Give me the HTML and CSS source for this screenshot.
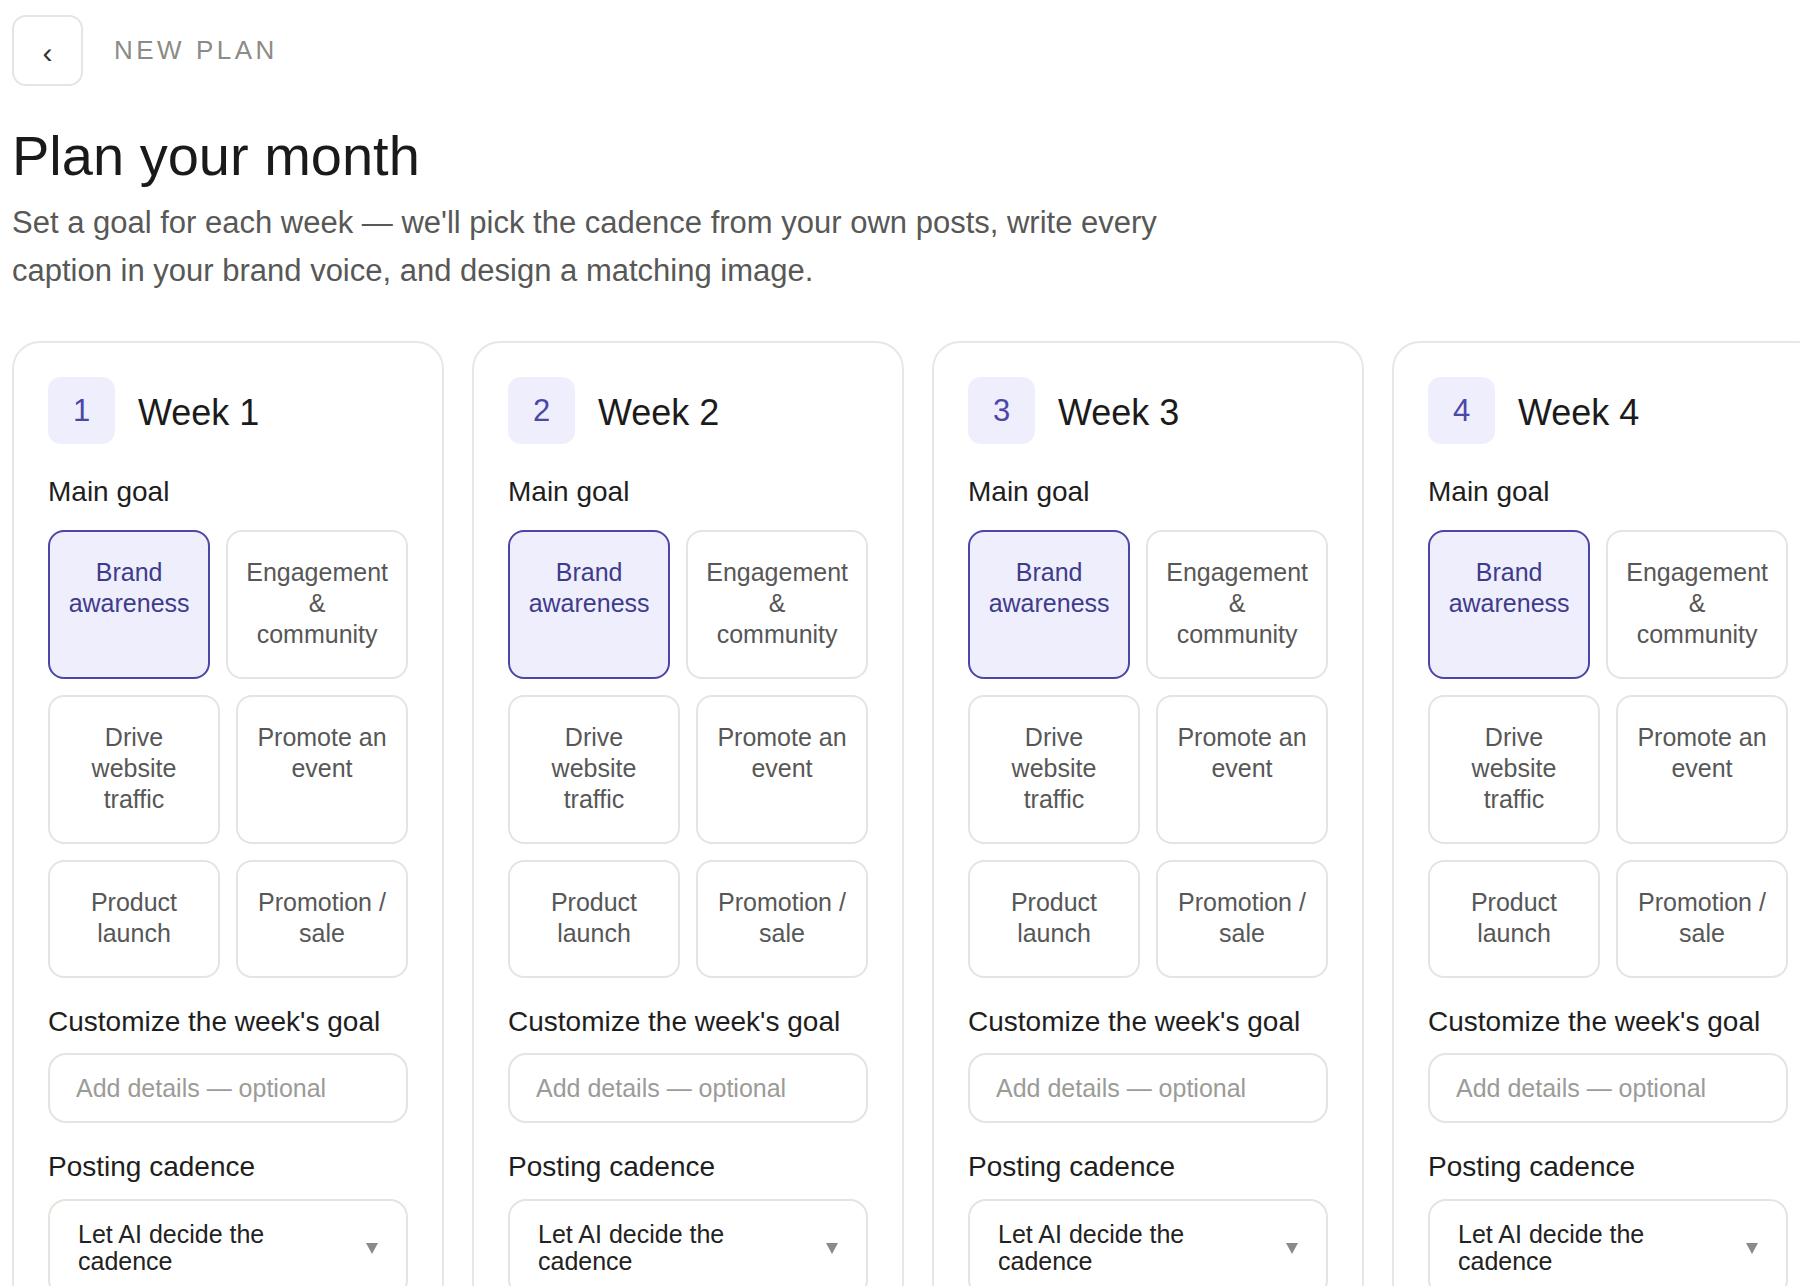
FILE: index.html
```html
<!DOCTYPE html>
<html lang="en">
<head>
    <meta charset="UTF-8">
    <meta name="viewport" content="width=device-width, initial-scale=1.0">
    <title>New Plan - Plan your month</title>
    <link rel="stylesheet" href="styles.css">
</head>
<body>

    <div class="page">
        <!-- Top bar -->
        <header class="topbar">
            <button type="button" class="back-btn" aria-label="Back">&lsaquo;</button>
            <span class="eyebrow">NEW PLAN</span>
        </header>

        <h1 class="page-title">Plan your month</h1>
        <p class="page-intro">Set a goal for each week — we'll pick the cadence from your own posts, write every caption in your brand voice, and design a matching image.</p>

        <!-- Weeks -->
        <div class="weeks">

            <section class="week-card">
                <div class="week-head">
                    <span class="week-num">1</span>
                    <h2 class="week-title">Week 1</h2>
                </div>
                <div class="field">
                    <div class="field-label">Main goal</div>
                    <div class="goals">
                        <div class="goal-row">
                            <div class="goal selected">Brand awareness</div>
                            <div class="goal">Engagement &amp; community</div>
                        </div>
                        <div class="goal-row">
                            <div class="goal">Drive website traffic</div>
                            <div class="goal">Promote an event</div>
                        </div>
                        <div class="goal-row">
                            <div class="goal">Product launch</div>
                            <div class="goal">Promotion / sale</div>
                        </div>
                    </div>
                </div>
                <div class="field">
                    <label class="field-label" for="details1">Customize the week's goal</label>
                    <input type="text" id="details1" class="text-input" placeholder="Add details — optional">
                </div>
                <div class="field">
                    <div class="field-label">Posting cadence</div>
                    <div class="select-box">
                        <span class="select-value">Let AI decide the cadence</span>
                        <svg class="select-arrow" width="12" height="11" viewBox="0 0 12 11"><polygon points="0,0 12,0 6,11" fill="#8a8a88"/></svg>
                    </div>
                </div>
            </section>

            <section class="week-card">
                <div class="week-head">
                    <span class="week-num">2</span>
                    <h2 class="week-title">Week 2</h2>
                </div>
                <div class="field">
                    <div class="field-label">Main goal</div>
                    <div class="goals">
                        <div class="goal-row">
                            <div class="goal selected">Brand awareness</div>
                            <div class="goal">Engagement &amp; community</div>
                        </div>
                        <div class="goal-row">
                            <div class="goal">Drive website traffic</div>
                            <div class="goal">Promote an event</div>
                        </div>
                        <div class="goal-row">
                            <div class="goal">Product launch</div>
                            <div class="goal">Promotion / sale</div>
                        </div>
                    </div>
                </div>
                <div class="field">
                    <label class="field-label" for="details2">Customize the week's goal</label>
                    <input type="text" id="details2" class="text-input" placeholder="Add details — optional">
                </div>
                <div class="field">
                    <div class="field-label">Posting cadence</div>
                    <div class="select-box">
                        <span class="select-value">Let AI decide the cadence</span>
                        <svg class="select-arrow" width="12" height="11" viewBox="0 0 12 11"><polygon points="0,0 12,0 6,11" fill="#8a8a88"/></svg>
                    </div>
                </div>
            </section>

            <section class="week-card">
                <div class="week-head">
                    <span class="week-num">3</span>
                    <h2 class="week-title">Week 3</h2>
                </div>
                <div class="field">
                    <div class="field-label">Main goal</div>
                    <div class="goals">
                        <div class="goal-row">
                            <div class="goal selected">Brand awareness</div>
                            <div class="goal">Engagement &amp; community</div>
                        </div>
                        <div class="goal-row">
                            <div class="goal">Drive website traffic</div>
                            <div class="goal">Promote an event</div>
                        </div>
                        <div class="goal-row">
                            <div class="goal">Product launch</div>
                            <div class="goal">Promotion / sale</div>
                        </div>
                    </div>
                </div>
                <div class="field">
                    <label class="field-label" for="details3">Customize the week's goal</label>
                    <input type="text" id="details3" class="text-input" placeholder="Add details — optional">
                </div>
                <div class="field">
                    <div class="field-label">Posting cadence</div>
                    <div class="select-box">
                        <span class="select-value">Let AI decide the cadence</span>
                        <svg class="select-arrow" width="12" height="11" viewBox="0 0 12 11"><polygon points="0,0 12,0 6,11" fill="#8a8a88"/></svg>
                    </div>
                </div>
            </section>

            <section class="week-card">
                <div class="week-head">
                    <span class="week-num">4</span>
                    <h2 class="week-title">Week 4</h2>
                </div>
                <div class="field">
                    <div class="field-label">Main goal</div>
                    <div class="goals">
                        <div class="goal-row">
                            <div class="goal selected">Brand awareness</div>
                            <div class="goal">Engagement &amp; community</div>
                        </div>
                        <div class="goal-row">
                            <div class="goal">Drive website traffic</div>
                            <div class="goal">Promote an event</div>
                        </div>
                        <div class="goal-row">
                            <div class="goal">Product launch</div>
                            <div class="goal">Promotion / sale</div>
                        </div>
                    </div>
                </div>
                <div class="field">
                    <label class="field-label" for="details4">Customize the week's goal</label>
                    <input type="text" id="details4" class="text-input" placeholder="Add details — optional">
                </div>
                <div class="field">
                    <div class="field-label">Posting cadence</div>
                    <div class="select-box">
                        <span class="select-value">Let AI decide the cadence</span>
                        <svg class="select-arrow" width="12" height="11" viewBox="0 0 12 11"><polygon points="0,0 12,0 6,11" fill="#8a8a88"/></svg>
                    </div>
                </div>
            </section>

        </div>
    </div>

</body>
</html>
```

FILE: styles.css
```css
/* Reset */
* {
    margin: 0;
    padding: 0;
    box-sizing: border-box;
}

body {
    font-family: "Liberation Sans", Arial, sans-serif;
    background-color: #fff;
    color: #1c1c1c;
    overflow: hidden;
}

.page {
    padding: 15px 12px 40px;
}

/* Top bar */
.topbar {
    display: flex;
    align-items: center;
    gap: 31px;
}

.back-btn {
    width: 71px;
    height: 71px;
    border: 2px solid #e7e5e1;
    border-radius: 14px;
    background-color: #fff;
    color: #333;
    font-family: inherit;
    font-size: 30px;
    line-height: 1;
    display: flex;
    align-items: center;
    justify-content: center;
    padding-top: 4px;
    cursor: pointer;
}

.eyebrow {
    font-size: 26px;
    letter-spacing: 3.5px;
    color: #8b8b87;
}

/* Heading */
.page-title {
    margin-top: 36px;
    font-size: 56px;
    font-weight: normal;
    line-height: 1.2;
    color: #1a1a1a;
}

.page-intro {
    margin-top: 10px;
    max-width: 1200px;
    font-size: 31px;
    line-height: 48px;
    color: #585856;
}

/* Week cards */
.weeks {
    display: flex;
    gap: 28px;
    margin-top: 46px;
}

.week-card {
    flex: 0 0 432px;
    border: 2px solid #e9e7e2;
    border-radius: 28px;
    padding: 34px;
    background-color: #fff;
}

.week-head {
    display: flex;
    align-items: center;
    gap: 23px;
}

.week-num {
    width: 67px;
    height: 67px;
    border-radius: 13px;
    background-color: #efeefc;
    color: #4b47a8;
    font-size: 31px;
    display: flex;
    align-items: center;
    justify-content: center;
}

.week-title {
    font-size: 36px;
    font-weight: normal;
    color: #1b1b1b;
    padding-top: 5px;
}

/* Fields */
.field {
    margin-top: 27px;
}

.week-head + .field {
    margin-top: 31px;
}

.field-label {
    display: block;
    font-size: 28px;
    line-height: 1.2;
    color: #1e1e1e;
    margin-bottom: 15px;
}

/* Goal tiles */
.goals {
    display: flex;
    flex-direction: column;
    gap: 16px;
    margin-top: 21px;
}

.field .field-label:has(+ .goals) {
    margin-bottom: 0;
}

.goal-row {
    display: flex;
    gap: 16px;
}

.goal {
    flex: 1 1 0;
    border: 2px solid #e6e4df;
    border-radius: 16px;
    padding: 25px 18px 27px;
    font-size: 25px;
    line-height: 31px;
    text-align: center;
    color: #575757;
    background-color: #fff;
    cursor: pointer;
}

.goal.selected {
    border-color: #4c46a6;
    background-color: #eeeefc;
    color: #3f3b8c;
}

/* Text input */
.text-input {
    width: 100%;
    height: 70px;
    padding: 0 26px;
    border: 2px solid #e6e4df;
    border-radius: 18px;
    font-family: inherit;
    font-size: 25px;
    color: #222;
    background-color: #fff;
    outline: none;
}

.text-input::placeholder {
    color: #9b9b98;
}

/* Cadence select */
.select-box {
    display: flex;
    align-items: center;
    justify-content: space-between;
    border: 2px solid #e6e4df;
    border-radius: 18px;
    padding: 20px 28px;
    font-size: 25px;
    line-height: 1.1;
    color: #222;
    cursor: pointer;
}

.select-value {
    max-width: 230px;
}

.select-arrow {
    flex-shrink: 0;
}
```
